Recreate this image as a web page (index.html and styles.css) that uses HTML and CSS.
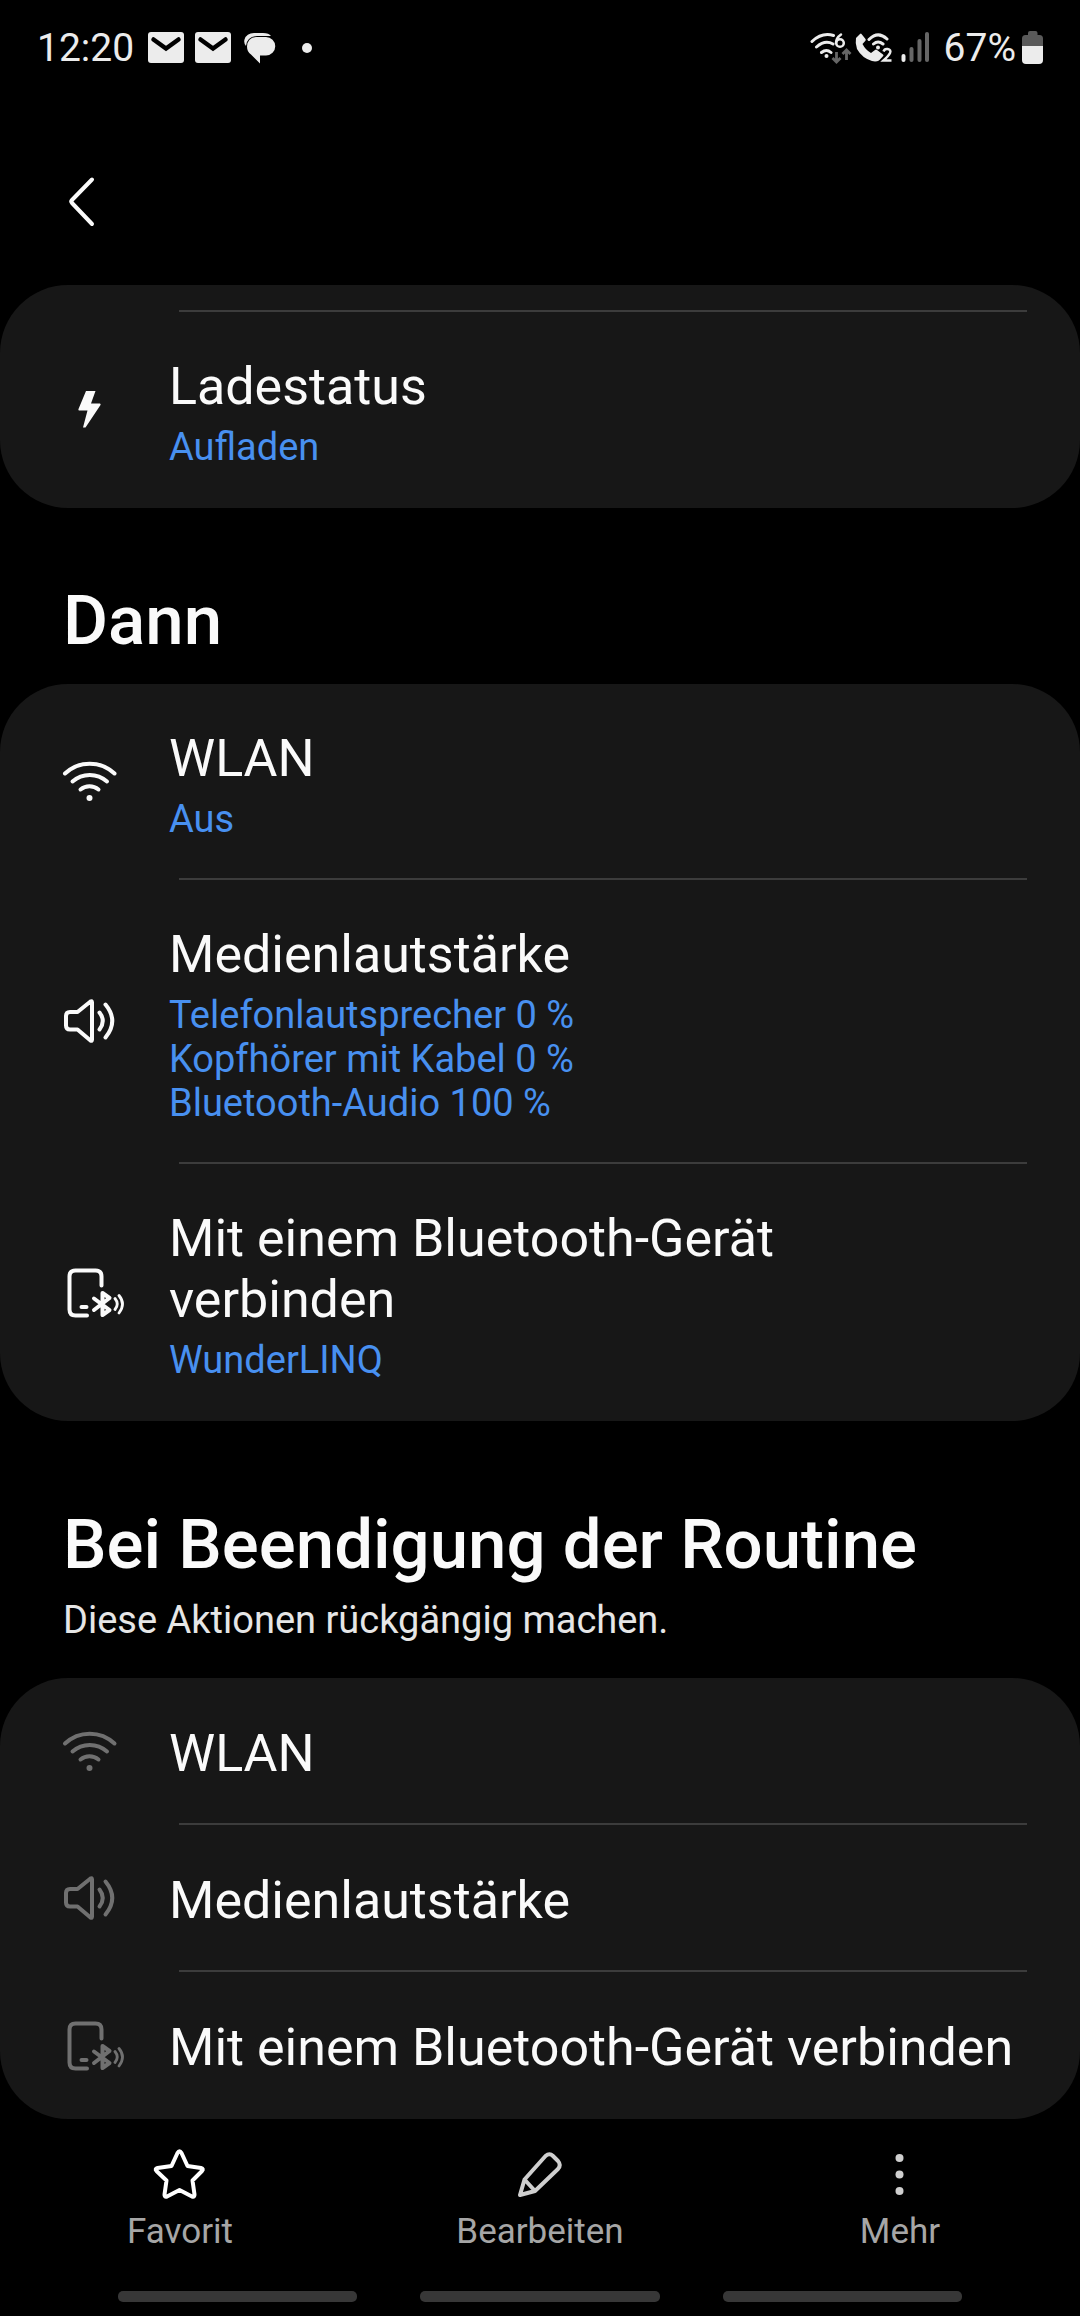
FILE: index.html
```html
<!DOCTYPE html>
<html lang="de">
<head>
<meta charset="utf-8">
<meta name="viewport" content="width=device-width, initial-scale=1">
<title>Routine</title>
<link rel="stylesheet" href="styles.css">
</head>
<body>
<svg class="sprite" width="0" height="0" aria-hidden="true">
  <symbol id="wifi" viewBox="0 0 72 72">
    <g fill="none" stroke="currentColor" stroke-width="4" stroke-linecap="round">
      <path d="M11 28.500a36 36 0 0 1 49.500 0"/>
      <path d="M18.500 36.500a26 26 0 0 1 34.500 0"/>
      <path d="M26.500 44.500a14.500 14.500 0 0 1 18 0"/>
    </g>
    <circle cx="35.500" cy="53" r="3" fill="currentColor"/>
  </symbol>
  <symbol id="speaker" viewBox="0 0 72 72">
    <g fill="none" stroke="currentColor" stroke-width="4" stroke-linecap="round" stroke-linejoin="round">
      <path d="M16 27h7.500L36.500 16.500q1.500-1 1.500 1v37q0 2-1.500 1L23.500 44.500H16q-4 0-4-4v-9.500q0-4 4-4z"/>
      <path d="M45.500 27.500q6.500 8.500 0 17"/>
      <path d="M51.500 19.500q13.500 16.500 0 33"/>
    </g>
  </symbol>
  <symbol id="bluetooth-device" viewBox="0 0 72 72">
    <g fill="none" stroke="currentColor" stroke-linecap="round" stroke-linejoin="round">
      <path stroke-width="4" d="M47.500 29.500v-9q0-6-6-6h-20q-6 0-6 6v33q0 6 6 6h11.500M27.500 51h5"/>
      <path stroke-width="4" d="M40 42.500L55.500 54l-7 5V37l7 5L40 54"/>
      <path stroke-width="2.800" d="M61 42.500q4.500 5.500 0 11M65 39.500q7 8.500 0 17.500"/>
    </g>
  </symbol>
</svg>

<header class="status">
  <span class="status-text">12:20</span>
  <svg class="mail" viewBox="0 0 36 31" aria-hidden="true"><rect width="36" height="31" rx="3" fill="currentColor"/><path d="M5.500 7.500L18 16.500 30.500 7.500" fill="none" stroke="#000" stroke-width="4.500" stroke-linecap="round"/></svg>
  <svg class="mail" viewBox="0 0 36 31" aria-hidden="true"><rect width="36" height="31" rx="3" fill="currentColor"/><path d="M5.500 7.500L18 16.500 30.500 7.500" fill="none" stroke="#000" stroke-width="4.500" stroke-linecap="round"/></svg>
  <svg class="chat" viewBox="0 0 32 31" aria-hidden="true"><path d="M10 0h9q6 0 8 3H13Q3 3.500 2 13-.5 10 .5 6.500 2.500 0 10 0z" fill="currentColor"/><path d="M12.500 4h9.500a9.250 9.250 0 0 1 0 18.500h-6V30.500L7 21.500Q3 19 3 13.500 3.500 4.500 12.500 4z" fill="currentColor"/></svg>
  <svg class="more-dot" viewBox="0 0 10 10" aria-hidden="true"><circle cx="5" cy="5" r="5" fill="currentColor"/></svg>
  <span class="status-right">
    <svg class="net" viewBox="0 0 120 32" aria-hidden="true">
      <g fill="none" stroke="currentColor" stroke-width="3" stroke-linecap="round">
        <path d="M2 9.500Q12 0 23.500 3.500M6.500 15Q15 7.500 23 12M11.500 20.500q5-4 9.500 0"/>
        <path d="M31 2.500Q26 6 26 11" stroke-width="2.500"/>
        <circle cx="30" cy="11" r="3.800" stroke-width="2.500"/>
        <path d="M59 7.500Q68-1.500 77 7M63.500 12Q68 8 73 12" />
      </g>
      <circle cx="16.500" cy="24" r="2" fill="currentColor"/>
      <circle cx="68" cy="15.500" r="2" fill="currentColor"/>
      <g fill="none" stroke="#666" stroke-width="2.800"><path d="M26.500 20v9M22.500 26l4 4 4-4M36.500 28V18M32.500 22l4-4 4 4"/></g>
      <path d="M46 6l4-4q1-.8 1.500 0l4 5q.8 1-.3 2l-2.700 3q3 6 8.500 9l4-3q1-.8 2 0l6 4.500q1 1 0 1.800l-4 4.200q-3 1.500-7 .5-10-3-15-12-2-6-1-11z" fill="currentColor"/>
      <path d="M73.500 19.500q1-3 4-2.500 4 .8 2.500 4-1.500 3-6.500 7.500h8" fill="none" stroke="#000" stroke-width="5"/>
      <path d="M73.500 19.500q1-3 4-2.500 4 .8 2.500 4-1.500 3-6.500 7.500h8" fill="none" stroke="currentColor" stroke-width="2.500"/>
      <g fill="#666"><rect x="99.500" y="15" width="4" height="15" rx="2"/><rect x="107.500" y="7" width="4" height="23" rx="2"/><rect x="115" y="0" width="4" height="30" rx="2"/></g>
      <rect x="91.500" y="22" width="4" height="8" rx="2" fill="currentColor"/>
    </svg>
    <span class="status-text">67%</span>
    <svg class="battery" viewBox="0 0 21 33" aria-hidden="true"><path d="M6 4V2q0-2 2-2h5.500q2 0 2 2v2h2q3.500 0 3.500 3.500V15H0V7.500Q0 4 3.500 4z" fill="#5a5a5a"/><path d="M0 15h21v14q0 4-4 4H4q-4 0-4-4z" fill="currentColor"/></svg>
  </span>
</header>

<nav class="topbar">
  <button class="back" type="button" aria-label="Zurück">
    <svg viewBox="0 0 72 72"><path d="M46 14.500L26 35q-1.500 1.500 0 3L46 59" fill="none" stroke="currentColor" stroke-width="4" stroke-linecap="round" stroke-linejoin="round"/></svg>
  </button>
</nav>

<main>
  <section class="card card-scrolled">
    <hr>
    <div class="row">
      <svg class="icon" viewBox="0 0 72 72" aria-hidden="true"><path d="M32 18h9.500L37 30.500h9q1 .5.500 1.500L31.500 54.500H29l4.500-17H25q-1-.5-.5-1.500z" fill="currentColor"/></svg>
      <div class="row-text"><h3>Ladestatus</h3><p>Aufladen</p></div>
    </div>
  </section>

  <div class="heading"><h2>Dann</h2></div>
  <section class="card">
    <div class="row">
      <svg class="icon" aria-hidden="true"><use href="#wifi"/></svg>
      <div class="row-text"><h3>WLAN</h3><p>Aus</p></div>
    </div>
    <hr>
    <div class="row">
      <svg class="icon" aria-hidden="true"><use href="#speaker"/></svg>
      <div class="row-text"><h3>Medienlautstärke</h3><p>Telefonlautsprecher 0 %<br>Kopfhörer mit Kabel 0 %<br>Bluetooth-Audio 100 %</p></div>
    </div>
    <hr>
    <div class="row">
      <svg class="icon" aria-hidden="true"><use href="#bluetooth-device"/></svg>
      <div class="row-text"><h3>Mit einem Bluetooth-Gerät verbinden</h3><p>WunderLINQ</p></div>
    </div>
  </section>

  <div class="heading heading-described"><h2>Bei Beendigung der Routine</h2><p>Diese Aktionen rückgängig machen.</p></div>
  <section class="card card-undo">
    <div class="row">
      <svg class="icon" aria-hidden="true"><use href="#wifi"/></svg>
      <div class="row-text"><h3>WLAN</h3></div>
    </div>
    <hr>
    <div class="row">
      <svg class="icon" aria-hidden="true"><use href="#speaker"/></svg>
      <div class="row-text"><h3>Medienlautstärke</h3></div>
    </div>
    <hr>
    <div class="row">
      <svg class="icon" aria-hidden="true"><use href="#bluetooth-device"/></svg>
      <div class="row-text"><h3>Mit einem Bluetooth-Gerät verbinden</h3></div>
    </div>
  </section>
</main>

<footer>
  <nav class="actions">
    <button type="button">
      <svg class="icon star" viewBox="0 0 72 72" aria-hidden="true"><path d="M33.500 15q2-3.500 4 0l6 13 13.500 2q3 .8 1 3L48.500 42.500l2 14q.3 3-2.500 2L35.500 52 23 58.500q-2.800 1-2.500-2l2-14L12.500 33q-2-2.200 1-3l14-2z" fill="none" stroke="currentColor" stroke-width="4" stroke-linejoin="round"/></svg>
      <span>Favorit</span>
    </button>
    <button type="button">
      <svg class="icon" viewBox="0 0 72 72" aria-hidden="true"><path d="M41.500 18q4-3.500 7.500 0l5 5q3.500 4 0 8L31 53 16 57l4.500-15.500zM20.500 41.500L31 53" fill="none" stroke="currentColor" stroke-width="4" stroke-linejoin="round"/></svg>
      <span>Bearbeiten</span>
    </button>
    <button type="button">
      <svg class="icon" viewBox="0 0 72 72" aria-hidden="true"><g fill="currentColor"><circle cx="35.500" cy="20" r="4"/><circle cx="35.500" cy="36.500" r="4"/><circle cx="35.500" cy="53" r="4"/></g></svg>
      <span>Mehr</span>
    </button>
  </nav>
  <div class="gestures"><i></i><i></i><i></i></div>
</footer>
</body>
</html>
```

FILE: styles.css
```css
* { box-sizing: border-box; }

body {
  margin: 0;
  min-height: 100vh;
  display: flex;
  flex-direction: column;
  background: #000;
  color: #fafafa;
  font-family: Roboto, sans-serif;
  font-size: 38px;
  line-height: 44px;
}

h2, h3, p { margin: 0; }
svg { display: block; flex: none; }
.sprite { position: absolute; }

button {
  padding: 0;
  border: 0;
  background: none;
  color: inherit;
  font: inherit;
}

/* Status bar */
.status {
  display: flex;
  align-items: center;
  height: 95px;
  padding: 0 37px;
  color: #ececec;
}
.status-text { font-size: 39px; }
.mail { width: 36px; height: 31px; margin-right: 11px; }
.status-text + .mail { margin-left: 14px; }
.chat { width: 32px; height: 31px; margin: 2px 26px 0 2px; }
.more-dot { width: 10px; height: 10px; }
.status-right {
  display: flex;
  align-items: center;
  margin-left: auto;
}
.net { width: 120px; height: 32px; margin-right: 14px; }
.battery { width: 21px; height: 33px; margin-left: 6px; }

/* Top bar */
.topbar {
  display: flex;
  align-items: center;
  height: 190px;
  padding: 22px 46px 0;
}
.back svg { width: 72px; height: 72px; }

/* Cards */
.card {
  padding-bottom: 2px;
  border-radius: 68px;
  background: #171717;
}
.card-scrolled { padding-top: 25px; }

.card hr {
  height: 2px;
  margin: 0 53px 0 179px;
  border: 0;
  background: #3c3c3c;
}

.row {
  display: flex;
  align-items: center;
  gap: 43px;
  padding-left: 54px;
}
.icon { width: 72px; height: 72px; }

.row-text {
  flex: 1;
  padding: 44px 180px 37px 0;
}
.row-text h3 {
  font-size: 52px;
  font-weight: 400;
  line-height: 61px;
}
.row-text p {
  margin-top: 8px;
  color: #4890f0;
}

.card-undo .row-text { padding: 45px 53px 39px 0; }
.card-undo .icon { color: #707070; }

/* Section headings */
.heading { padding: 73px 63px 23px; }
.heading h2 {
  font-size: 69px;
  font-weight: 500;
  line-height: 80px;
}
.heading-described { padding: 84px 63px 36px; }
.heading p { margin-top: 13px; color: #e6e6e6; }

/* Bottom actions */
footer { margin-top: auto; }
.actions {
  display: grid;
  grid-template-columns: repeat(3, 1fr);
  padding: 19px 0 38px;
}
.actions button {
  display: flex;
  flex-direction: column;
  align-items: center;
  gap: 1px;
  color: #a6a6a6;
  font-size: 35px;
  line-height: 42px;
}
.actions .icon { color: #cfcfcf; }
.actions .star { color: #fff; }

.gestures {
  display: flex;
  gap: 63px;
  padding: 0 118px 14px;
}
.gestures i {
  flex: 1;
  height: 11px;
  border-radius: 5px;
  background: #373737;
}
```
